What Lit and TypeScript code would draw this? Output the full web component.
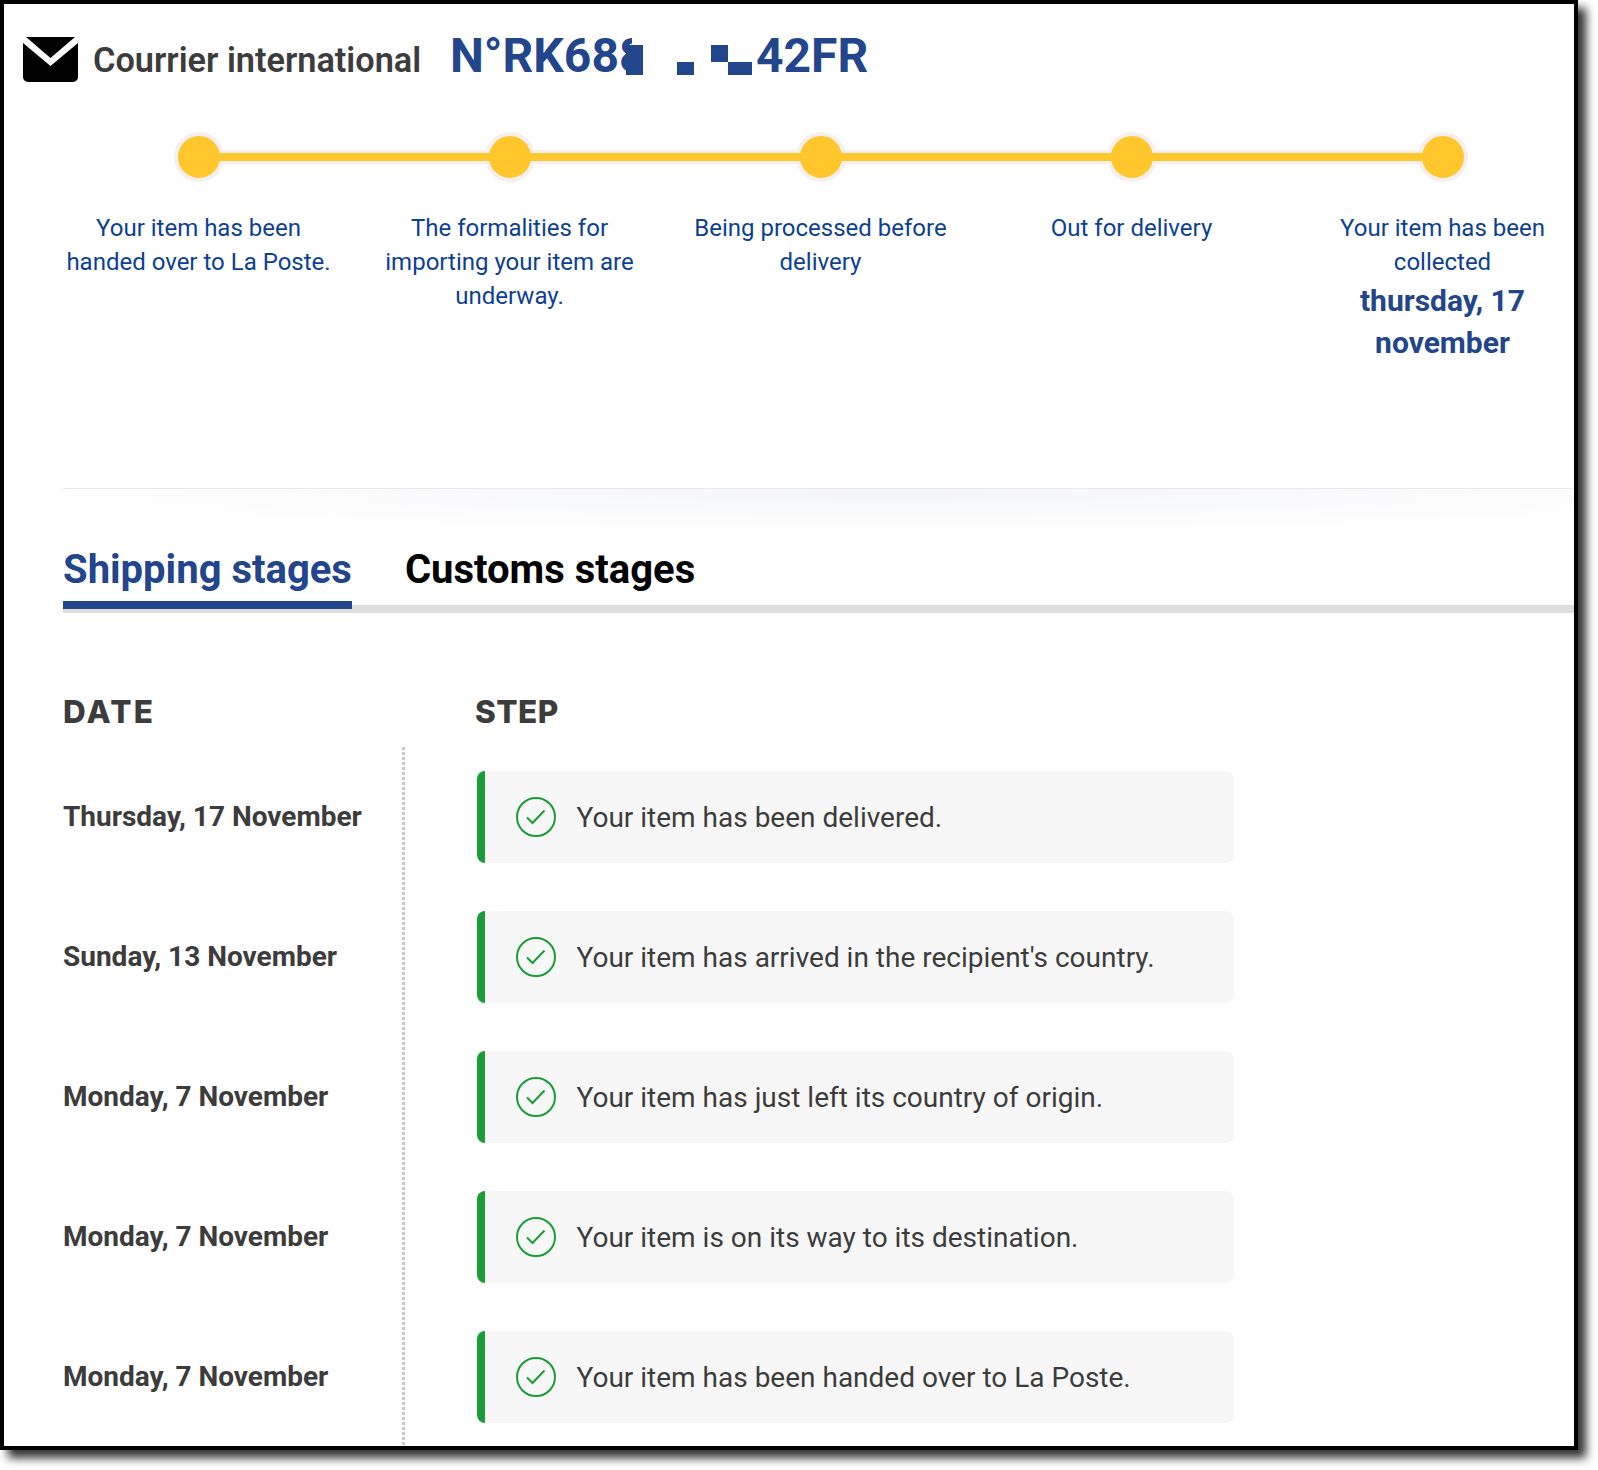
import { LitElement, html, css } from "lit";
import { customElement } from "lit/decorators.js";

const STAGES = [
  "Your item has been handed over to La Poste.",
  "The formalities for importing your item are underway.",
  "Being processed before delivery",
  "Out for delivery",
  "Your item has been collected",
];
const ROWS = [
  ["Thursday, 17 November", "Your item has been delivered."],
  ["Sunday, 13 November", "Your item has arrived in the recipient's country."],
  ["Monday, 7 November", "Your item has just left its country of origin."],
  ["Monday, 7 November", "Your item is on its way to its destination."],
  ["Monday, 7 November", "Your item has been handed over to La Poste."],
];

@customElement("app-root")
export class AppRoot extends LitElement {
  static styles = css`
    :host { display: block; width: 1598px; height: 1470px; background: #fff; overflow: hidden; font-family: Roboto, sans-serif; }
    .frame { box-sizing: border-box; width: 1578px; height: 1450px; border: 4px solid #000; box-shadow: 8px 8px 9px #333; background: #fff; overflow: hidden; }
    .head { display: flex; align-items: flex-start; height: 79px; padding: 33px 0 0 19px; }
    .env { width: 55px; height: 46px; display: block; flex: none; }
    .titles { display: flex; align-items: baseline; line-height: 46px; margin: -4px 0 0 15px; }
    .carrier { width: 326px; font-size: 34.300px; font-weight: 600; color: #3c3c3c; white-space: nowrap; }
    .track { position: relative; display: flex; align-items: baseline; margin-left: 31px; font-size: 48px; font-weight: 700; color: #22458c; white-space: nowrap; }
    .lead { display: inline-block; width: 193px; vertical-align: baseline; }
    .tail { margin-left: 113px; }
    .redact { position: absolute; background: #22458c; }
    .r0 { left: 182px; top: 4px; width: 20px; height: 40px; background: #fff; }
    .r1 { left: 176px; top: 12px; width: 17px; height: 30px; }
    .r2 { left: 227px; top: 29px; width: 17px; height: 13px; }
    .r3 { left: 261px; top: 12px; width: 17px; height: 17px; }
    .r4 { left: 278px; top: 29px; width: 24px; height: 13px; }
    .stepper { display: grid; grid-template-columns: repeat(5, 311px); margin: 16px 0 0 39px; }
    .stage { position: relative; display: flex; flex-direction: column; align-items: center; text-align: center; color: #0d3f95; font-size: 24px; line-height: 34px; }
    .dot { position: relative; z-index: 1; width: 42px; height: 42px; border-radius: 50%; background: #ffc72c; border: 4px solid #f5efed; }
    .line { position: absolute; left: 50%; width: 311px; top: 18px; height: 8px; background: #ffc72c; border-top: 3px solid #f5efed; border-bottom: 3px solid #f5efed; }
    .line::after { content: ""; position: absolute; z-index: 2; left: 0; right: 0; top: 0; height: 8px; background: #ffc72c; }
    .label { width: 270px; margin-top: 29px; }
    .when { margin-top: 1px; font-size: 30px; line-height: 42px; font-weight: 700; color: #22458c; }
    .sep { margin: 124px 0 0 59px; height: 44px; border-top: 1px solid #e8e8e8; background: radial-gradient(ellipse 60% 100% at 55% 0, #f4f5f8, #fff); }
    .tabs { display: flex; margin: 9px 0 0 59px; height: 63px; border-bottom: 8px solid #dedede; }
    .tab { font-size: 40px; font-weight: 700; height: 59px; line-height: 56px; color: #000; margin-right: 53px; white-space: nowrap; }
    .tab.on { color: #22458c; border-bottom: 8px solid #22458c; }
    .cols { display: grid; grid-template-columns: 412px 1fr; margin: 77px 0 0 59px; font-family: Inter, sans-serif; font-size: 31.500px; font-weight: 800; color: #3c3c3c; line-height: 44px; }
    .col-date { letter-spacing: 2.200px; }
    .col-step { letter-spacing: 0.500px; }
    .body { display: grid; grid-template-columns: 339px 1fr; margin: 13px 0 0 59px; }
    .dates { display: flex; flex-direction: column; padding-top: 24px; gap: 48px; }
    .date { box-sizing: border-box; height: 92px; padding-bottom: 2px; display: flex; align-items: center; font-size: 28px; font-weight: 700; color: #3c3c3c; }
    .steps { display: flex; flex-direction: column; gap: 48px; padding: 24px 0 0 75px; height: 700px; background: repeating-linear-gradient(#c8c8c8 0 3px, transparent 3px 5px) left top / 3px 100% no-repeat; }
    .card { box-sizing: border-box; width: 757px; height: 92px; display: flex; align-items: center; gap: 20.500px; background: #f7f7f7; border-left: 8px solid #1a9c37; border-radius: 8px; padding-left: 31px; font-size: 28px; color: #3c3c3c; flex: none; }
    .ok { width: 40px; height: 40px; flex: none; display: block; }
  `;

  render() {
    return html`<div class="frame">
      <div class="head">
        <svg class="env" viewBox="0 0 55 46"><path fill="#000" d="M3 0H52L27.500 21Z"/><path fill="#000" d="M0 6 27.500 29 55 6V40a5 5 0 0 1-5 5H5a5 5 0 0 1-5-5Z"/></svg>
        <div class="titles">
          <span class="carrier">Courrier international</span>
          <span class="track"><span class="lead">N°RK688</span><span class="tail">42FR</span>
            <i class="redact r0"></i><i class="redact r1"></i><i class="redact r2"></i><i class="redact r3"></i><i class="redact r4"></i>
          </span>
        </div>
      </div>
      <div class="stepper">
        ${STAGES.map((s, i) => html`<div class="stage">
          ${i < 4 ? html`<div class="line"></div>` : ""}
          <div class="dot"></div>
          <div class="label">${s}${i === 4 ? html`<div class="when">thursday, 17 november</div>` : ""}</div>
        </div>`)}
      </div>
      <div class="sep"></div>
      <div class="tabs"><div class="tab on">Shipping stages</div><div class="tab">Customs stages</div></div>
      <div class="cols"><div class="col-date">DATE</div><div class="col-step">STEP</div></div>
      <div class="body">
        <div class="dates">${ROWS.map((r) => html`<div class="date">${r[0]}</div>`)}</div>
        <div class="steps">${ROWS.map((r) => html`<div class="card">
          <svg class="ok" viewBox="0 0 40 40"><circle cx="20" cy="20" r="19" fill="none" stroke="#1a9c37" stroke-width="2"/><path d="M11 20.500l5.500 5.500L28.500 13.500" fill="none" stroke="#1a9c37" stroke-width="2"/></svg>
          <span>${r[1]}</span>
        </div>`)}</div>
      </div>
    </div>`;
  }
}
